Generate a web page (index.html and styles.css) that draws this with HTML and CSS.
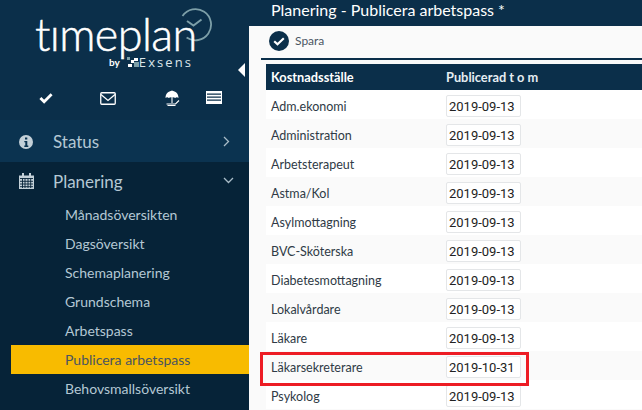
FILE: index.html
```html
<!DOCTYPE html>
<html lang="sv">
<head>
<meta charset="utf-8">
<title>Planering - Publicera arbetspass</title>
<link rel="stylesheet" href="styles.css">
</head>
<body>
<div class="app">
  <aside class="sidebar">
    <div class="brand">
      <svg class="clock" viewBox="0 0 34 34" width="34" height="34"><path d="M8.600 29.500A15.600 15.600 0 1 0 4.500 8" fill="none" stroke="#7d9fa8" stroke-width="1.800"/><path d="M9 13l6.500 4.500 8-6" fill="none" stroke="#7d9fa8" stroke-width="2"/></svg>
      <div class="wordmark">tımeplan</div>
      <div class="byline">
        <span class="by">by</span>
        <svg class="exmark" viewBox="0 0 12 10" width="12" height="10"><rect x="0" y="0" width="3" height="3" fill="#7d9fa8"/><rect x="7" y="1" width="4" height="3" fill="#fff"/><rect x="4" y="3" width="3" height="3" fill="#fff"/><rect x="7" y="5" width="5" height="5" fill="#7d9fa8"/><rect x="1" y="7" width="4" height="3" fill="#fff"/></svg>
        <span class="exsens">Exsens</span>
      </div>
      <svg class="collapse" viewBox="0 0 7 14" width="7" height="14"><path d="M7 0v14L0 7z" fill="#fff"/></svg>
    </div>
    <div class="quick">
      <svg class="q-check" viewBox="0 0 15 12" width="14" height="12"><path d="M1.500 6l4 4L13.500 2" fill="none" stroke="#fff" stroke-width="3"/></svg>
      <svg class="q-mail" viewBox="0 0 16 13" width="16" height="13"><rect x=".75" y=".75" width="14.500" height="11.500" rx="1" fill="none" stroke="#fff" stroke-width="1.300"/><path d="M1 2.500l7 6 7-6" fill="none" stroke="#fff" stroke-width="1.300"/></svg>
      <svg class="q-beach" viewBox="0 0 16 16" width="16" height="16"><path d="M.5 8C.5 3.500 3.500 1 7 1s6.500 2.500 6.500 7c-1-1-2.500-1-3.200 0-.9-1-5.700-1-6.600 0-.7-1-2.200-1-3.200 0z" fill="#fff"/><path d="M7 .500V13" fill="none" stroke="#fff" stroke-width="1.100"/><path d="M1.500 14h9l3.500-3.500M2.500 15.500h8" fill="none" stroke="#fff" stroke-width="1.100"/></svg>
      <svg class="q-list" viewBox="0 0 16 13" width="16" height="13"><rect x=".5" y=".5" width="15" height="12" fill="none" stroke="#fff"/><path fill="#fff" d="M0 0h16v2.500H0zM0 3.800h16v1.700H0zM0 6.800h16v1.700H0zM0 9.800h16V13H0z"/></svg>
    </div>
    <nav class="nav">
      <div class="group group-status">
        <svg class="gicon" viewBox="0 0 14 14" width="14" height="14"><circle cx="7" cy="7" r="7" fill="#c3d0d8"/><rect x="6" y="2.500" width="2.300" height="2" fill="#0b3350"/><path d="M5.300 6h3v4.500h1V12H5.300v-1.500h1V7.300h-1z" fill="#0b3350"/></svg>
        <span class="glabel">Status</span>
        <svg class="chev" viewBox="0 0 7 11" width="7" height="11"><path d="M1 1l4.500 4.500L1 10" fill="none" stroke="#a9bcc8" stroke-width="1.300"/></svg>
      </div>
      <div class="group group-plan">
        <svg class="gicon" viewBox="0 0 15 16" width="15" height="16"><path fill="#c3d0d8" d="M0 2.500h3V0h2v2.500h5V0h2v2.500h3V16H0z"/><path stroke="#062338" stroke-width=".9" fill="none" d="M1 5.500h13M1 8.300h13M1 11h13M1 13.700h13M3.500 5.500V15M6 5.500V15M9 5.500V15M11.700 5.500V15"/></svg>
        <span class="glabel">Planering</span>
        <svg class="chev chev-down" viewBox="0 0 11 7" width="11" height="7"><path d="M1 1l4.500 4.500L10 1" fill="none" stroke="#a9bcc8" stroke-width="1.300"/></svg>
      </div>
      <ul class="sub">
        <li>Månadsöversikten</li>
        <li>Dagsöversikt</li>
        <li>Schemaplanering</li>
        <li>Grundschema</li>
        <li>Arbetspass</li>
        <li class="active">Publicera arbetspass</li>
        <li>Behovsmallsöversikt</li>
      </ul>
    </nav>
  </aside>
  <main class="main">
    <header class="title">Planering - Publicera arbetspass *</header>
    <div class="toolbar">
      <svg viewBox="0 0 20 20" width="20" height="20"><circle cx="10" cy="10" r="10" fill="#0b2f4a"/><path d="M5.200 10.200l3.300 3.100 6.300-6" fill="none" stroke="#fff" stroke-width="2.200"/></svg>
      <span class="save">Spara</span>
    </div>
    <div class="content">
      <div class="thead"><span class="c1">Kostnadsställe</span><span class="c2">Publicerad t o m</span></div>
      <div class="row"><span class="c1">Adm.ekonomi</span><span class="date">2019-09-13</span></div>
      <div class="row alt"><span class="c1">Administration</span><span class="date">2019-09-13</span></div>
      <div class="row"><span class="c1">Arbetsterapeut</span><span class="date">2019-09-13</span></div>
      <div class="row alt"><span class="c1">Astma/Kol</span><span class="date">2019-09-13</span></div>
      <div class="row"><span class="c1">Asylmottagning</span><span class="date">2019-09-13</span></div>
      <div class="row alt"><span class="c1">BVC-Sköterska</span><span class="date">2019-09-13</span></div>
      <div class="row"><span class="c1">Diabetesmottagning</span><span class="date">2019-09-13</span></div>
      <div class="row alt"><span class="c1">Lokalvårdare</span><span class="date">2019-09-13</span></div>
      <div class="row"><span class="c1">Läkare</span><span class="date">2019-09-13</span></div>
      <div class="row alt highlighted"><span class="c1">Läkarsekreterare</span><span class="date">2019-10-31</span></div>
      <div class="row"><span class="c1">Psykolog</span><span class="date">2019-09-13</span></div>
    </div>
  </main>
</div>
</body>
</html>
```
FILE: styles.css
```css
*, *::after { box-sizing: border-box; }
html, body { margin: 0; height: 100%; overflow: hidden; }
body { font-family: Lato, "Liberation Sans", sans-serif; background: #fafafa; }
.app { display: flex; width: 642px; height: 410px; overflow: hidden; }

.sidebar { width: 249px; flex: none; background: #062338; display: flex; flex-direction: column; color: #b4c8d4; }
.brand { position: relative; height: 78px; flex: none; background: #0b2f4a; }
.quick { height: 42px; flex: none; background: #0b2f4a; display: flex; align-items: flex-start; padding-left: 39px; }
.q-check { margin-top: 14px; }
.q-mail { margin: 14px 0 0 47px; }
.q-beach { margin: 12px 0 0 49px; }
.q-list { margin: 13px 0 0 25px; }
.wordmark { position: absolute; left: 35px; top: 14px; font-size: 45px; font-weight: 300; line-height: 40px; color: #fff; letter-spacing: -.6px; -webkit-text-stroke: .5px #fff; }
.clock { position: absolute; left: 178px; top: 8px; }
.byline { position: absolute; left: 109px; top: 55px; height: 14px; display: flex; align-items: center; gap: 7px; color: #fff; }
.by { font-size: 10px; font-weight: 700; }
.exsens { font-size: 13px; font-family: "Open Sans", sans-serif; font-weight: 400; letter-spacing: 2.100px; color: #dce6ea; line-height: 14px; margin-left: -7px; }
.collapse { position: absolute; left: 238px; top: 63px; }
.nav { display: flex; flex-direction: column; flex: 1; }
.group { height: 42px; display: flex; align-items: center; position: relative; font-size: 17px; padding-left: 53px; }
.group-status { background: #0b3350; }
.group-plan { background: #062338; height: 38px; padding-top: 1px; }
.gicon { position: absolute; left: 19px; top: 15px; }
.group-plan .gicon { top: 11px; }
.chev { position: absolute; left: 223px; top: 16px; }
.chev-down { left: 223px; top: 15px; }
.sub { list-style: none; margin: 0; padding: 0 0 0 11px; font-size: 14px; }
.sub li { height: 29px; line-height: 29px; padding-left: 54px; }
.sub li.active { background: #f8bb00; color: #4a5560; }

.main { flex: 1; min-width: 0; display: flex; flex-direction: column; }
.title { height: 26px; flex: none; background: #0b2f4a; color: #fff; font-size: 16px; line-height: 20px; padding-left: 22px; }
.toolbar { height: 32px; flex: none; display: flex; align-items: center; gap: 6px; padding: 0 0 2px 20px; font-size: 12px; color: #4b5563; }
.save { margin-top: -1px; }
.content { flex: 1; margin-left: 12px; padding: 4px 0 0 5px; border-top: 2px solid #0b2f4a; }
.thead { height: 26px; background: #0b2f4a; color: #fff; font-weight: 700; font-size: 12.800px; display: flex; align-items: center; padding-left: 5px; }
.thead .c1, .row .c1 { width: 175px; flex: none; }
.thead .c2 { color: #e5edf2; }
.row { height: 29px; display: flex; align-items: center; padding: 3px 0 0 5px; font-size: 12.500px; color: #2f3a46; background: #fff; }
.row.alt { background: #fafafa; }
.date { width: 75px; height: 22px; line-height: 21px; border: 1px solid #e4e6e8; border-radius: 2px; background: #fff; font-family: Roboto, "Open Sans", sans-serif; font-size: 13px; padding-left: 2px; color: #222; white-space: nowrap; }
.highlighted { position: relative; }
.highlighted::after { content: ""; position: absolute; left: -6px; top: 1px; width: 269px; height: 34px; border: 3px solid #ed1c24; }
```
